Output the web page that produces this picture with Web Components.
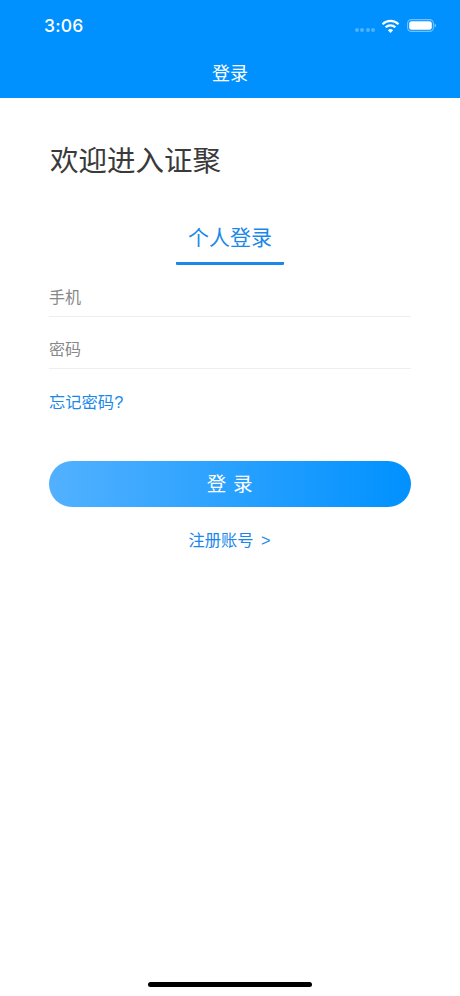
<!DOCTYPE html>
<html lang="zh">
<head>
<meta charset="utf-8">
<title>登录</title>
<style>
  html, body { margin: 0; height: 100%; background: #fff; }
  body { font-family: "Liberation Sans", "Noto Sans CJK SC", sans-serif; }
</style>
</head>
<body>
<login-page>
  <status-bar slot="top" time="3:06"></status-bar>
  <nav-bar slot="top">登录</nav-bar>
  <welcome-title>欢迎进入证聚</welcome-title>
  <login-tab>个人登录</login-tab>
  <form-field>手机</form-field>
  <form-field>密码</form-field>
  <forgot-link>忘记密码?</forgot-link>
  <gradient-button>登 录</gradient-button>
  <register-link>注册账号 &gt;</register-link>
</login-page>

<script>
// page frame - header on top, form in the middle, home indicator pinned by flex
var template_page = document.createElement("template");
template_page.innerHTML = `
<style>
  :host { display: flex; flex-direction: column; height: 996px; background: #fff; overflow: hidden; }
  .form { flex: 1; display: flex; flex-direction: column; padding: 0 49px; }
  .home { display: flex; justify-content: center; padding-bottom: 9px; }
  .home i { display: block; width: 164px; height: 5px; border-radius: 3px; background: #000; }
</style>
<slot name="top"></slot>
<div class="form"><slot></slot></div>
<div class="home"><i></i></div>
`;
class LoginPage extends HTMLElement {
  constructor(){ super(); this.attachShadow({mode:"open"}); }
  connectedCallback(){ this.shadowRoot.appendChild(template_page.content.cloneNode(true)); }
}
customElements.define("login-page", LoginPage);

var template_status = document.createElement("template");
template_status.innerHTML = `
<style>
  :host { display: flex; align-items: center; justify-content: space-between; height: 50px; box-sizing: border-box;
    padding: 2px 24px 0 44px; background: #0091ff; color: #fff; }
  #time { font: 500 17.5px/24px Inter, "Open Sans", sans-serif; letter-spacing: 0.2px; }
  .icons { display: flex; align-items: center; }
  .dots { display: flex; gap: 1.5px; margin-right: 6px; margin-top: 7px; }
  .dots i { width: 4px; height: 4px; border-radius: 50%; background: rgba(255,255,255,.3); }
  svg { display: block; }
</style>
<span id="time"></span>
<div class="icons">
  <div class="dots"><i></i><i></i><i></i><i></i></div>
  <svg width="19" height="15" viewBox="0 0 19 15" style="margin-right:7px">
    <path d="M1.5 5.2 A11.5 11.5 0 0 1 17.5 5.2" fill="none" stroke="#fff" stroke-width="2.2"/>
    <path d="M4.6 8.3 A7.2 7.2 0 0 1 14.4 8.3" fill="none" stroke="#fff" stroke-width="2.2"/>
    <path d="M9.5 14 L6.9 11.2 A3.7 3.7 0 0 1 12.1 11.2 Z" fill="#fff"/>
  </svg>
  <svg width="29" height="13" viewBox="0 0 29 13" style="margin-top:-1px">
    <rect x="0.6" y="0.6" width="25.8" height="11.8" rx="3.8" fill="none" stroke="#fff" stroke-opacity=".45" stroke-width="1.1"/>
    <rect x="2.2" y="2.2" width="22.6" height="8.6" rx="2.4" fill="#fff"/>
    <path d="M27.6 4.5 Q29 5.1 29 6.5 Q29 7.9 27.6 8.5 Z" fill="#fff" fill-opacity=".5"/>
  </svg>
</div>
`;
class StatusBar extends HTMLElement {
  constructor(){ super(); this.attachShadow({mode:"open"}); }
  connectedCallback(){
    this.shadowRoot.appendChild(template_status.content.cloneNode(true));
    this.shadowRoot.querySelector("#time").innerText = this.getAttribute("time");
  }
}
customElements.define("status-bar", StatusBar);

class NavBar extends HTMLElement {
  constructor(){
    super();
    this.attachShadow({mode:"open"}).innerHTML = `
    <style>
      :host { display: flex; align-items: center; justify-content: center; height: 48px; box-sizing: border-box;
        padding-bottom: 4px; background: #0091ff; color: #fff; font-size: 18px; }
    </style><slot></slot>`;
  }
}
customElements.define("nav-bar", NavBar);

class WelcomeTitle extends HTMLElement {
  constructor(){
    super();
    this.attachShadow({mode:"open"}).innerHTML = `
    <style>
      :host { display: block; margin: 42px 0 0 1px; font-size: 28.5px; line-height: 42px; color: #3a3a3a; }
    </style><slot></slot>`;
  }
}
customElements.define("welcome-title", WelcomeTitle);

class LoginTab extends HTMLElement {
  constructor(){
    super();
    this.attachShadow({mode:"open"}).innerHTML = `
    <style>
      :host { display: block; align-self: center; width: 108px; margin-top: 39px; padding-bottom: 7px; text-align: center;
        font-size: 21px; line-height: 34px; color: #1a88ea; border-bottom: 3px solid #1a88ea; border-radius: 1px; }
    </style><slot></slot>`;
  }
}
customElements.define("login-tab", LoginTab);

class FormField extends HTMLElement {
  constructor(){
    super();
    this.attachShadow({mode:"open"}).innerHTML = `
    <style>
      :host { display: block; height: 52px; box-sizing: border-box; padding: 21px 0 0 0;
        font-size: 16px; line-height: 24px; color: #888; border-bottom: 1px solid #eee; }
    </style><slot></slot>`;
  }
}
customElements.define("form-field", FormField);

class ForgotLink extends HTMLElement {
  constructor(){
    super();
    this.attachShadow({mode:"open"}).innerHTML = `
    <style>
      :host { display: block; margin: 21px 0 0 0; font-size: 16.3px; line-height: 24px; color: #1a88ea; }
    </style><slot></slot>`;
  }
}
customElements.define("forgot-link", ForgotLink);

class GradientButton extends HTMLElement {
  constructor(){
    super();
    this.attachShadow({mode:"open"}).innerHTML = `
    <style>
      :host { display: flex; align-items: center; justify-content: center; height: 46px; box-sizing: border-box; margin-top: 47px;
        padding-bottom: 3px; border-radius: 23px;
        background: linear-gradient(90deg, #52b1ff, #0091ff); color: #fff; font-size: 19.5px; letter-spacing: 0.7px; }
    </style><slot></slot>`;
  }
}
customElements.define("gradient-button", GradientButton);

class RegisterLink extends HTMLElement {
  constructor(){
    super();
    this.attachShadow({mode:"open"}).innerHTML = `
    <style>
      :host { display: block; margin-top: 21px; padding-right: 1px; text-align: center; font-size: 16.3px; line-height: 24px; color: #1a88ea; word-spacing: 3px; }
    </style><slot></slot>`;
  }
}
customElements.define("register-link", RegisterLink);
</script>
</body>
</html>
